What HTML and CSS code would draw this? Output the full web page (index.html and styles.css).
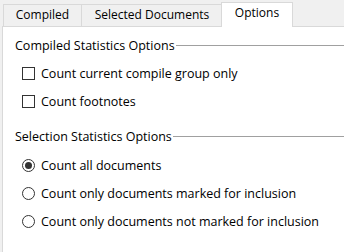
FILE: index.html
```html
<html>

<head>
    <meta charset="UTF-8">
    <title>Statistics Options</title>
    <link rel="stylesheet" href="styles.css">
</head>

<body>
    <div id="tabs">
        <div class="tab tab-compiled">Compiled</div>
        <div class="tab tab-selected">Selected Documents</div>
        <div class="tab tab-options active">Options</div>
    </div>
    <div id="panel">
        <div class="group">
            <div class="group-title"><span>Compiled Statistics Options</span><div class="rule"></div></div>
            <label class="row"><span class="check"></span>Count current compile group only</label>
            <label class="row"><span class="check"></span>Count footnotes</label>
        </div>
        <div class="group second">
            <div class="group-title"><span>Selection Statistics Options</span><div class="rule"></div></div>
            <label class="row"><span class="radio checked"></span>Count all documents</label>
            <label class="row"><span class="radio"></span>Count only documents marked for inclusion</label>
            <label class="row"><span class="radio"></span>Count only documents not marked for inclusion</label>
        </div>
    </div>
</body>

</html>
```

FILE: styles.css
```css
body {
    margin: 0;
    background-color: #f0f0f0;
    font-family: "Open Sans", "Noto Sans", sans-serif;
    font-size: 12px;
    color: #000000;
    overflow: hidden;
    width: 344px;
    height: 252px;
}

#tabs {
    display: flex;
    align-items: flex-end;
    padding-left: 3px;
    height: 26px;
}

.tab {
    box-sizing: border-box;
    height: 22px;
    line-height: 20px;
    text-align: center;
    border: 1px solid #d9d9d9;
    border-bottom: none;
    margin-right: -1px;
    background-color: #f0f0f0;
}

.tab-compiled {
    width: 79px;
}

.tab-selected {
    width: 142px;
}

.tab-options {
    width: 72px;
}

.tab.active {
    background-color: #ffffff;
    height: 25px;
    margin-left: -1px;
    margin-bottom: -1px;
    padding-bottom: 1px;
    position: relative;
}

#panel {
    box-sizing: border-box;
    background-color: #ffffff;
    border: 1px solid #d9d9d9;
    border-right: none;
    border-bottom: none;
    margin-left: 2px;
    height: 226px;
    padding-top: 11px;
    font-size: 12.5px;
}

.group-title {
    display: flex;
    align-items: flex-start;
    padding-left: 12px;
    line-height: 16px;
    height: 16px;
}

.rule {
    flex: 1;
    height: 1px;
    background-color: #a0a0a0;
    margin-top: 7px;
    margin-left: 1px;
}

.group-title + .row {
    margin-top: 5px;
}

.second {
    margin-top: 14px;
}

.second .group-title + .row {
    margin-top: 6px;
}

.row {
    display: flex;
    align-items: center;
    height: 28px;
    padding-left: 19px;
}

.check,
.radio {
    box-sizing: border-box;
    width: 13px;
    height: 13px;
    border: 1px solid #333333;
    background-color: #ffffff;
    margin-right: 6px;
    flex-shrink: 0;
}

.radio {
    border-radius: 50%;
    display: flex;
    align-items: center;
    justify-content: center;
}

.radio.checked::after {
    content: "";
    width: 7px;
    height: 7px;
    border-radius: 50%;
    background-color: #333333;
}
```
